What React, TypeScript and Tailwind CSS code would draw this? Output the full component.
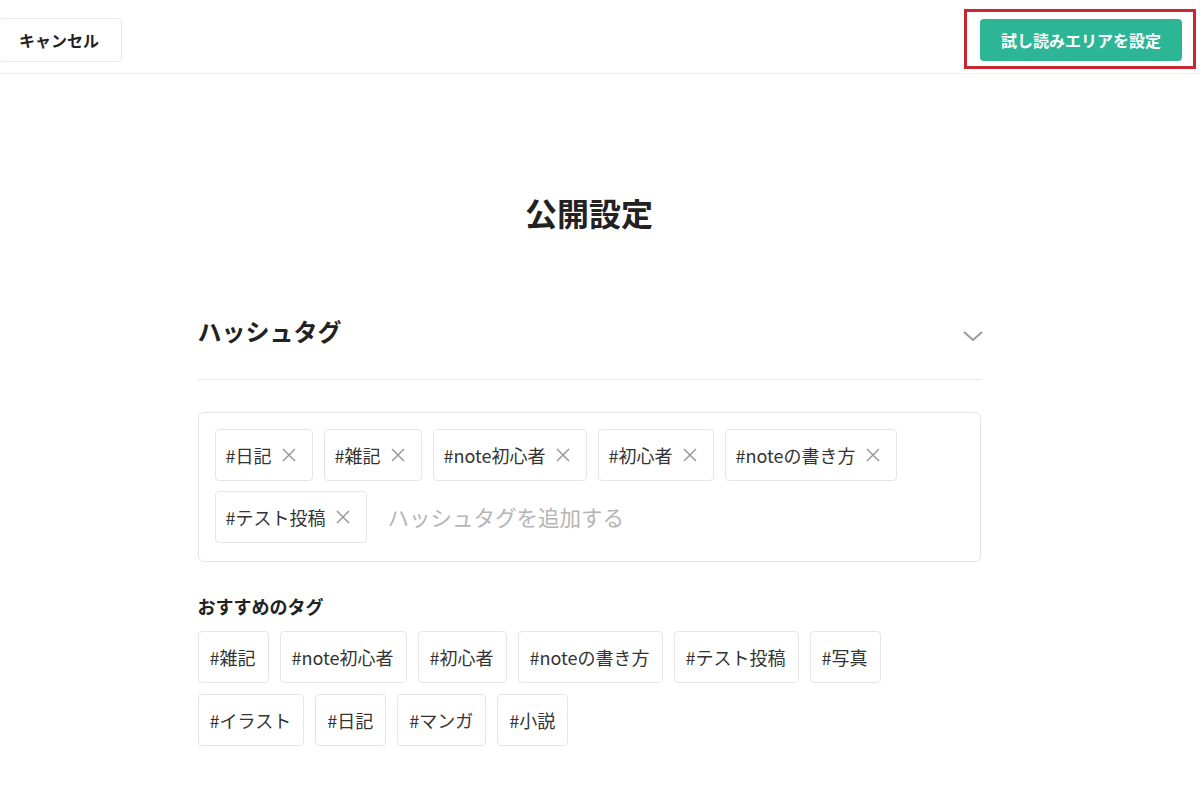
const current = ["#日記", "#雑記", "#note初心者", "#初心者", "#noteの書き方", "#テスト投稿"];
const suggested = [
  "#雑記",
  "#note初心者",
  "#初心者",
  "#noteの書き方",
  "#テスト投稿",
  "#写真",
  "#イラスト",
  "#日記",
  "#マンガ",
  "#小説",
];

export default function App() {
  return (
    <div
      className="min-h-[804px] w-[1200px] bg-white text-[#222]"
      style={{ fontFamily: '"Noto Sans CJK JP", "Noto Sans", sans-serif' }}
    >
      {/* Header */}
      <header className="flex h-[74px] items-center justify-between border-b border-[#efefef] pt-[6px] pr-[18px]">
        <button className="ml-[-1px] flex h-[44px] items-center rounded-[4px] border border-[#e9e9e9] bg-white pl-[19px] pr-[22px] text-[16px] font-bold">
          キャンセル
        </button>
        <div className="relative">
          <button className="flex h-[42px] w-[202px] items-center justify-center rounded-[4px] bg-[#2cb696] text-[16px] font-bold text-white">
            試し読みエリアを設定
          </button>
          {/* annotation frame */}
          <div className="pointer-events-none absolute left-[-16px] right-[-14px] top-[-10px] bottom-[-8px] border-[3px] border-[#c62a30]" />
        </div>
      </header>

      <main className="mx-auto flex w-[783px] -translate-x-[11px] flex-col">
        <h1 className="mt-[114px] text-center text-[32px] font-bold leading-[48px]">公開設定</h1>

        {/* Hashtag section */}
        <div className="mt-[77px] flex items-center justify-between border-b border-[#e8e8e8] pb-[30px]">
          <h2 className="text-[24px] font-bold leading-[36px]">ハッシュタグ</h2>
          <svg
            width="22"
            height="14"
            viewBox="0 0 22 14"
            fill="none"
            stroke="#9a9a9a"
            strokeWidth="2"
            className="mr-[-3px] translate-y-[5px]"
          >
            <path d="M2 3l9 8 9-8" />
          </svg>
        </div>

        <div className="mt-[32px] rounded-[6px] border border-[#e6e6e6] px-4 pt-4 pb-[18px]">
          <div className="flex flex-wrap gap-x-[11px] gap-y-[10px]">
            {current.map((t) => (
              <div
                key={t}
                className="flex h-[52px] items-center gap-[10px] rounded-[4px] border border-[#e6e6e6] pl-[10px] pr-[16px] text-[18px] text-[#333]"
              >
                <span>{t}</span>
                <svg width="14" height="14" viewBox="0 0 14 14" fill="none" stroke="#9a9a9a" strokeWidth="1.5">
                  <path d="M1 1l12 12M13 1L1 13" />
                </svg>
              </div>
            ))}
            <div className="flex h-[52px] items-center pl-[10px] text-[21.5px] text-[#b5b5b5]">
              ハッシュタグを追加する
            </div>
          </div>
        </div>

        <h3 className="mt-[32px] text-[18px] font-bold leading-[25px]">おすすめのタグ</h3>
        <div className="mt-[12px] flex w-[700px] flex-wrap gap-[11px]">
          {suggested.map((t, i) => (
            <div
              key={t + i}
              className="flex h-[52px] items-center rounded-[4px] border border-[#e6e6e6] pl-[11px] pr-[12px] text-[18px] text-[#333]"
            >
              {t}
            </div>
          ))}
        </div>
      </main>
    </div>
  );
}
